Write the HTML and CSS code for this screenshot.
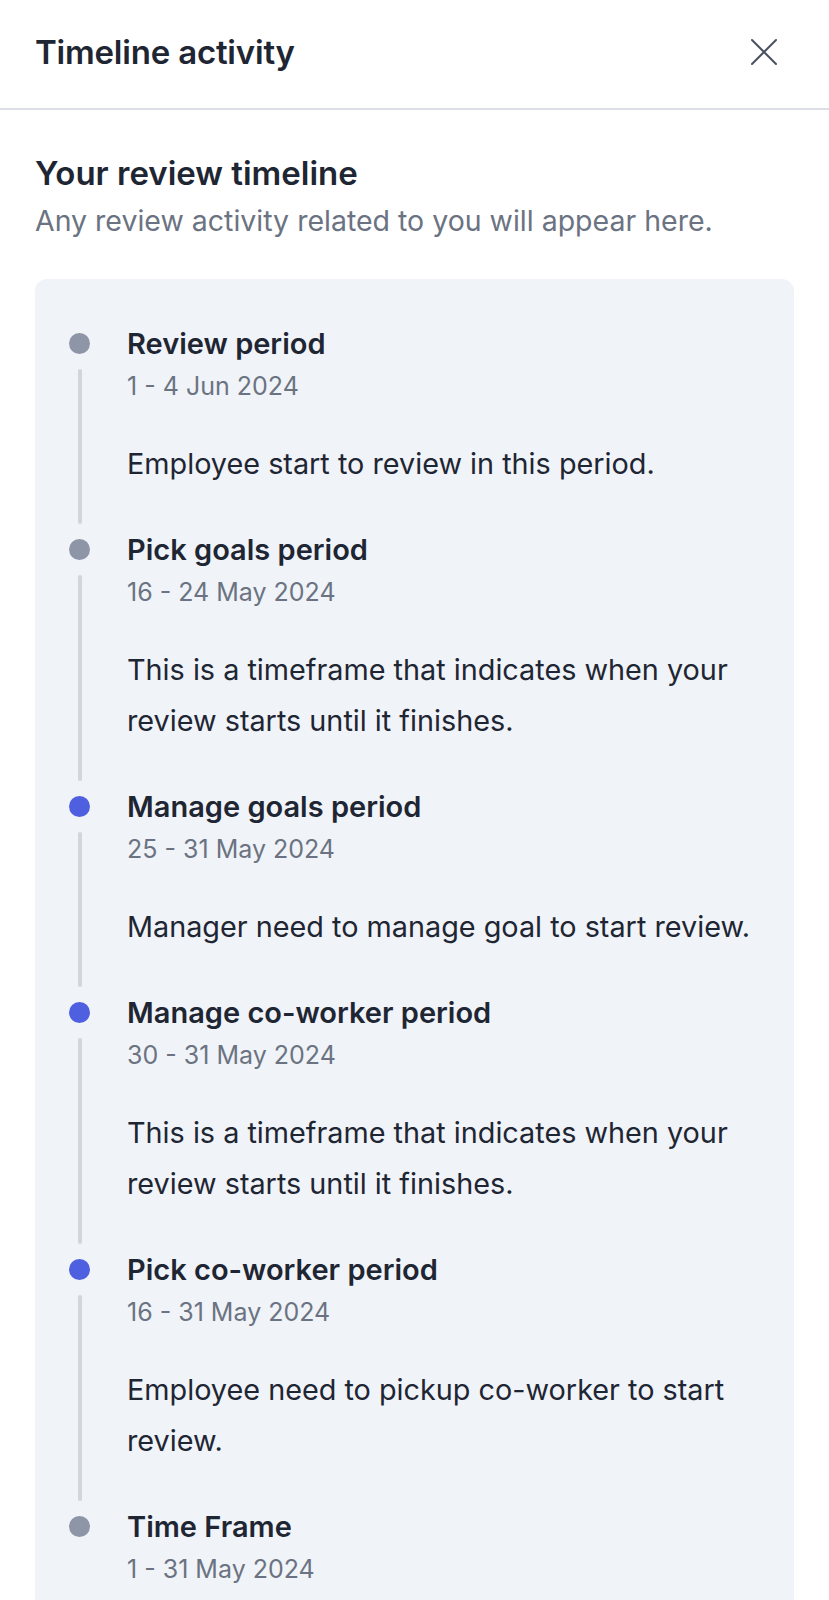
FILE: index.html
```html
<!DOCTYPE html>
<html lang="en">
<head>
    <meta charset="UTF-8">
    <meta name="viewport" content="width=device-width, initial-scale=1.0">
    <title>Timeline activity</title>
    <link rel="stylesheet" href="styles.css">
</head>
<body>

    <div class="header">
        <h1>Timeline activity</h1>
        <button class="close" aria-label="Close">
            <svg width="28" height="28" viewBox="0 0 28 28" fill="none" stroke="#4b5361" stroke-width="2" stroke-linecap="round">
                <path d="M2 2 L26 26 M26 2 L2 26"/>
            </svg>
        </button>
    </div>

    <div class="content">
        <h2>Your review timeline</h2>
        <p class="sub">Any review activity related to you will appear here.</p>

        <div class="card">
            <div class="item">
                <div class="rail"><span class="dot"></span><span class="line"></span></div>
                <div class="body">
                    <div class="title">Review period</div>
                    <div class="date">1 - 4 Jun 2024</div>
                    <div class="desc">Employee start to review in this period.</div>
                </div>
            </div>
            <div class="item">
                <div class="rail"><span class="dot"></span><span class="line"></span></div>
                <div class="body">
                    <div class="title">Pick goals period</div>
                    <div class="date">16 - 24 May 2024</div>
                    <div class="desc">This is a timeframe that indicates when your review starts until it finishes.</div>
                </div>
            </div>
            <div class="item">
                <div class="rail"><span class="dot active"></span><span class="line"></span></div>
                <div class="body">
                    <div class="title">Manage goals period</div>
                    <div class="date">25 - 31 May 2024</div>
                    <div class="desc">Manager need to manage goal to start review.</div>
                </div>
            </div>
            <div class="item">
                <div class="rail"><span class="dot active"></span><span class="line"></span></div>
                <div class="body">
                    <div class="title">Manage co-worker period</div>
                    <div class="date">30 - 31 May 2024</div>
                    <div class="desc">This is a timeframe that indicates when your review starts until it finishes.</div>
                </div>
            </div>
            <div class="item">
                <div class="rail"><span class="dot active"></span><span class="line"></span></div>
                <div class="body">
                    <div class="title">Pick co-worker period</div>
                    <div class="date">16 - 31 May 2024</div>
                    <div class="desc">Employee need to pickup co-worker to start review.</div>
                </div>
            </div>
            <div class="item">
                <div class="rail"><span class="dot"></span></div>
                <div class="body">
                    <div class="title">Time Frame</div>
                    <div class="date">1 - 31 May 2024</div>
                </div>
            </div>
        </div>
    </div>

</body>
</html>
```

FILE: styles.css
```css
body { margin: 0; font-family: Inter, "Noto Sans", sans-serif; color: #1f2633; background: #fff; }

.header { height: 110px; padding: 0 35px 4px; display: flex; align-items: center; justify-content: space-between; border-bottom: 2px solid #dcdfe5; box-sizing: border-box; }
.header h1 { margin: 0; font-size: 33px; font-weight: 600; letter-spacing: -0.2px; }
.close { background: none; border: 0; padding: 0; width: 28px; height: 28px; margin-right: 16px; cursor: pointer; }

.content { padding: 45px 35px 0; }
.content h2 { margin: 0; font-size: 33px; line-height: 36px; font-weight: 600; }
.sub { margin: 12px 0 0; font-size: 28.5px; line-height: 36px; color: #6b7382; }

.card { margin-top: 40px; background: #f0f3f8; border-radius: 12px; padding: 48px 30px 40px 34px; }

.item { display: flex; }
.rail { width: 21px; flex: none; display: flex; flex-direction: column; align-items: center; margin-right: 37px; }
.dot { width: 21px; height: 21px; border-radius: 50%; background: #8e95a6; margin-top: 6px; flex: none; }
.dot.active { background: #4e5fdf; }
.line { flex: 1; width: 4px; border-radius: 2px; background: #d1d5dc; margin: 15px 0 9px; }

.body { flex: 1; padding-bottom: 44px; }
.item:last-child .body { padding-bottom: 0; }
.title { font-size: 29px; line-height: 34px; font-weight: 600; }
.date { margin-top: 9px; font-size: 25px; line-height: 32px; color: #6b7382; }
.desc { margin-top: 36px; font-size: 28.8px; line-height: 51px; color: #1f2633; }
```
